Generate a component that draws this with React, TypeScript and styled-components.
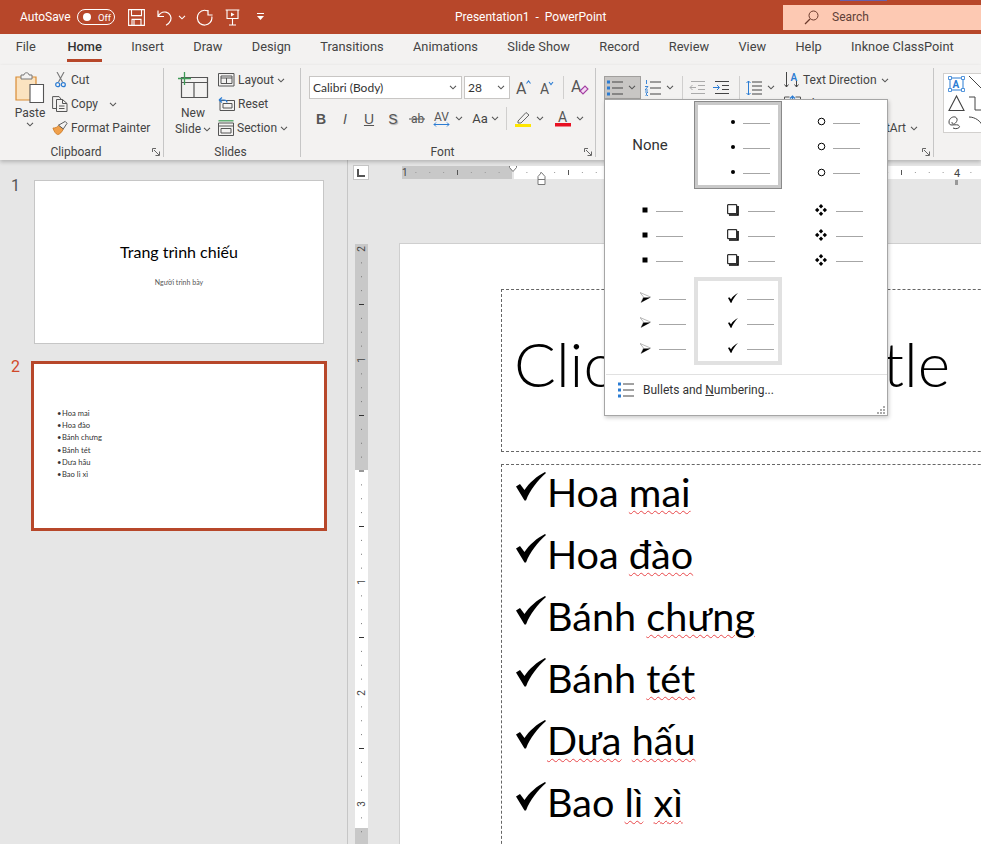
import React from "react";
import styled, { createGlobalStyle } from "styled-components";

const UI_FONT = `Roboto, "Open Sans", "Liberation Sans", sans-serif`;
const DOC_FONT = `Lato, "Noto Sans", "Liberation Sans", sans-serif`;
const BRAND = "#b7472a";

const GlobalStyle = createGlobalStyle`
  html, body { margin: 0; padding: 0; background: #e6e6e6; }
  * { box-sizing: border-box; }
`;

/* ---------- icons ---------- */
const Chevron = ({ color = "#555" }: { color?: string }) => (
  <svg width="8" height="5" viewBox="0 0 8 5" fill="none" stroke={color} strokeWidth="1.1">
    <path d="M1 .8 4 3.8 7 .8" />
  </svg>
);

const SaveIcon = () => (
  <svg width="17" height="17" viewBox="0 0 17 17" fill="none" stroke="#fff" strokeWidth="1.1">
    <path d="M.6.6h15.8v15.8H.6zM3.5.6v6h10v-6M4 16.4v-6h9v6M6 11v5.4" />
  </svg>
);
const UndoIcon = () => (
  <svg width="16" height="17" viewBox="0 0 16 17" fill="none" stroke="#fff" strokeWidth="1.2">
    <path d="M1 1.5v6h6M1.2 7.3C3 4 6 2.5 9 3.2c4 1 6 5 4.6 8.4-.8 2-2.6 3.6-4.6 4.6" />
  </svg>
);
const RedoIcon = () => (
  <svg width="17" height="17" viewBox="0 0 17 17" fill="none" stroke="#fff" strokeWidth="1.2">
    <path d="M12 1v5h4.600M11.5 1.800C8.500.8 5 1.500 3 4 .4 7.200 1 12 4 14.500c3 2.300 7.500 2 10-.8 1.600-1.800 2.200-4 1.800-6.200" />
  </svg>
);
const PresentIcon = () => (
  <svg width="15" height="17" viewBox="0 0 15 17" fill="none" stroke="#fff" strokeWidth="1.1">
    <path d="M.6 1h13.800M2 1v8.500h11V1M7.500 9.500V16M4 16h7" />
    <path d="M6 3.500 9.500 5.500 6 7.500z" fill="#fff" stroke="none" />
  </svg>
);
const CustomizeIcon = () => (
  <svg width="9" height="8" viewBox="0 0 9 8" fill="#fff">
    <rect x="1" y="0" width="7" height="1" />
    <path d="M1 3h7L4.500 7z" />
  </svg>
);
const SearchIcon = () => (
  <svg width="15" height="15" viewBox="0 0 15 15" fill="none" stroke="#6b3a2c" strokeWidth="1">
    <circle cx="9.500" cy="5.500" r="4.500" />
    <path d="M6 9 1 14" strokeWidth="1.300" />
  </svg>
);
const PasteIcon = () => (
  <svg width="30" height="31" viewBox="0 0 30 31">
    <path d="M1 5h20v23H1z" fill="#fbe3c0" stroke="#d98b34" strokeWidth="1.200" />
    <path d="M6 3h3c0-3 5-3 5 0h3v4H6z" fill="#f3f2f1" stroke="#777" strokeWidth="1" />
    <path d="M15 12.500h13.500v18H15z" fill="#fff" stroke="#555" strokeWidth="1.100" />
  </svg>
);
const ScissorsIcon = () => (
  <svg width="11" height="16" viewBox="0 0 11 16" fill="none">
    <path d="M2 0 7.500 10M9 0 3.500 10" stroke="#777" strokeWidth="1.100" />
    <circle cx="2.700" cy="12.700" r="2" stroke="#2b7cd3" strokeWidth="1.200" />
    <circle cx="8.300" cy="12.700" r="2" stroke="#2b7cd3" strokeWidth="1.200" />
  </svg>
);
const CopyIcon = () => (
  <svg width="16" height="16" viewBox="0 0 16 16" fill="none" stroke="#555" strokeWidth="1">
    <path d="M4 12.500H.6V.6h6.500L9 3" />
    <path d="M4.500 3.500h6l4.500 4v8H4.500zM10.500 3.500v4H15M7 10h5.500M7 12.500h5.500" />
  </svg>
);
const BrushIcon = () => (
  <svg width="17" height="16" viewBox="0 0 17 16">
    <path d="M1 8c3 0 5-1 6-3l5 4c-1 3-4 6-6 6-2-.5-4-3.500-5-7z" fill="#f0a04b" stroke="#c8741c" strokeWidth=".8" />
    <path d="M7 5l5 4 4-6-2-2z" fill="#f3f2f1" stroke="#555" strokeWidth="1" />
  </svg>
);
const LauncherIcon = () => (
  <svg width="8" height="8" viewBox="0 0 8 8" fill="none" stroke="#666" strokeWidth="1">
    <path d="M7.500 3.500v4h-4M.5 4V.5H4M2 2l5 5" />
  </svg>
);
const NewSlideIcon = () => (
  <svg width="31" height="27" viewBox="0 0 31 27">
    <path d="M3.500 5.500h26v20h-26zM3.500 10.500h26M16 10.500v15" fill="#f3f2f1" stroke="#555" strokeWidth="1.200" />
    <path d="M0 6.500h13M6.500 0v13" fill="none" stroke="#3f9b57" strokeWidth="1.300" />
  </svg>
);
const LayoutIcon = () => (
  <svg width="17" height="14" viewBox="0 0 17 14" fill="none" stroke="#555" strokeWidth="1">
    <path d="M.5.500h15.500v12.500H.5zM3 3h11v7.500H3zM3 5h11M8.500 5v5.500" />
  </svg>
);
const ResetIcon = () => (
  <svg width="17" height="14" viewBox="0 0 17 14" fill="none">
    <path d="M2 3.500h14.500v10H2zM5 6.500h9v4.500H5z" stroke="#555" strokeWidth="1" />
    <path d="M1 3 4 .5M1 3l3 2.500M1.500 3H6c2 0 3 1 3 2.500" stroke="#2b7cd3" strokeWidth="1.200" />
  </svg>
);
const SectionIcon = () => (
  <svg width="16" height="16" viewBox="0 0 16 16" fill="none" stroke="#555" strokeWidth="1">
    <path d="M.5.800h15" stroke="#3f9b57" strokeWidth="1.200" />
    <path d="M.5 3h15v12.500H.5zM.5 6h15M3 8.500h10v4.500H3z" />
  </svg>
);
const GrowIcon = () => (
  <svg width="17" height="18" viewBox="0 0 17 18">
    <text x="1" y="15" fontFamily={UI_FONT} fontSize="16" fill="#555">A</text>
    <path d="M11.500 4.500 13.500 2l2 2.500" fill="none" stroke="#2b7cd3" strokeWidth="1.100" />
  </svg>
);
const ShrinkIcon = () => (
  <svg width="16" height="17" viewBox="0 0 16 17">
    <text x="1" y="15" fontFamily={UI_FONT} fontSize="14" fill="#555">A</text>
    <path d="M10 3l2 2.500L14 3" fill="none" stroke="#2b7cd3" strokeWidth="1.100" />
  </svg>
);
const ClearIcon = () => (
  <svg width="20" height="19" viewBox="0 0 20 19">
    <text x="1" y="14" fontFamily={UI_FONT} fontSize="16" fill="#555">A</text>
    <path d="M10 13l5-5 3 3-5 5z" fill="#f4d9f4" stroke="#a33ea1" strokeWidth="1.100" />
  </svg>
);
const StrikeIcon = () => (
  <svg width="18" height="15" viewBox="0 0 18 15">
    <text x="3" y="11.500" fontFamily={UI_FONT} fontSize="12" fill="#555">ab</text>
    <path d="M1 8h16" stroke="#555" strokeWidth="1" />
  </svg>
);
const SpacingIcon = () => (
  <svg width="18" height="18" viewBox="0 0 18 18">
    <text x="1" y="11" fontFamily={UI_FONT} fontSize="12" fill="#555">AV</text>
    <path d="M1 14.500h15M3 12.500l-2 2 2 2M14 12.500l2 2-2 2" fill="none" stroke="#2b7cd3" strokeWidth="1" />
  </svg>
);
const HighlightIcon = () => (
  <svg width="16" height="16" viewBox="0 0 16 16">
    <path d="M3 10 11 1.500l3 2.500-8 8H3z" fill="#f3f2f1" stroke="#666" strokeWidth="1" />
    <rect x="0" y="13" width="16" height="3" fill="#ffe600" />
  </svg>
);
const FontColorIcon = () => (
  <svg width="16" height="17" viewBox="0 0 16 17">
    <text x="3" y="12" fontFamily={UI_FONT} fontSize="14" fill="#555">A</text>
    <rect x="0" y="13" width="16" height="3.500" fill="#e81123" />
  </svg>
);
const BulletsIcon = ({ size = 16 }: { size?: number }) => (
  <svg width={size} height={size} viewBox="0 0 16 16" fill="none">
    <path d="M5 2h11M5 8h11M5 14h11" stroke="#444" strokeWidth="1" />
    <path d="M0 .5h3v3H0zM0 6.500h3v3H0zM0 12.500h3v3H0z" fill="#2b7cd3" />
  </svg>
);
const NumberingIcon = () => (
  <svg width="16" height="16" viewBox="0 0 16 16" fill="none">
    <path d="M5 2h11M5 8h11M5 14h11" stroke="#444" strokeWidth="1" />
    <path d="M1.500 0v4M0 6.500h3L0 10h3M0 12h3L1 14l2 2H0" stroke="#2b7cd3" strokeWidth=".9" />
  </svg>
);
const OutdentIcon = () => (
  <svg width="16" height="13" viewBox="0 0 16 13" fill="none" stroke="#aaa" strokeWidth="1">
    <path d="M2 .5h14M9 4.500h7M9 8.500h7M2 12.500h14M7 6.500H1M3.500 4 1 6.500 3.500 9" />
  </svg>
);
const IndentIcon = () => (
  <svg width="16" height="13" viewBox="0 0 16 13" fill="none">
    <path d="M2 .5h14M9 4.500h7M9 8.500h7M2 12.500h14" stroke="#444" strokeWidth="1" />
    <path d="M0 6.500h6M4 4l2.500 2.500L4 9" stroke="#2b7cd3" strokeWidth="1" />
  </svg>
);
const LineSpacingIcon = () => (
  <svg width="16" height="16" viewBox="0 0 16 16" fill="none">
    <path d="M6 2h10M6 6h10M6 10h10M6 14h10" stroke="#444" strokeWidth="1" />
    <path d="M2.500 1v14M.5 3l2-2 2 2M.5 13l2 2 2-2" stroke="#2b7cd3" strokeWidth="1" />
  </svg>
);
const TextDirectionIcon = () => (
  <svg width="15" height="18" viewBox="0 0 15 18" fill="none">
    <path d="M2.500 1v15M.5 13.500l2 2.500 2-2.500M12.500 10v6M10.500 13.500l2 2.500 2-2.500" stroke="#444" strokeWidth="1" />
    <text x="6.500" y="9.500" fontFamily={UI_FONT} fontSize="10" fontWeight="600" fill="#2b7cd3">A</text>
  </svg>
);
const AlignTextIcon = () => (
  <svg width="17" height="18" viewBox="0 0 17 18" fill="none">
    <path d="M.5 5V2h5M11.500 2h5v3M.5 13v3h16v-3" stroke="#555" strokeWidth="1" />
    <path d="M8.500 10V1M6 3.500l2.500-2.500L11 3.500" stroke="#2b7cd3" strokeWidth="1.200" />
  </svg>
);
const ShapesIcon = () => (
  <svg width="38" height="57" viewBox="0 0 38 57" fill="none">
    <path d="M5 3h13v12H5z" stroke="#2b7cd3" strokeWidth="1" />
    <path d="M3.500 1.500h3v3h-3zM16.500 1.500h3v3h-3zM3.500 13.500h3v3h-3zM16.500 13.500h3v3h-3z" fill="#fff" stroke="#2b7cd3" strokeWidth=".8" />
    <text x="7.500" y="13" fontFamily={UI_FONT} fontSize="10" fontWeight="700" fill="#2b7cd3">A</text>
    <path d="M24 1l14 14" stroke="#444" strokeWidth="1" />
    <path d="M11.500 21 4 35.500h15z" stroke="#444" strokeWidth="1.100" />
    <path d="M24 22h6v13h8" stroke="#444" strokeWidth="1" />
    <path d="M8 53c4 2 9-1 5-3-4-1-9 2-9-3s7-7 8-3c1 3-5 8-5 3" stroke="#444" strokeWidth="1" />
    <path d="M24 42c6 0 12 4 14 10" stroke="#444" strokeWidth="1" />
  </svg>
);
const CheckBullet = () => (
  <svg width="30" height="29" viewBox="0 0 30 29" fill="#000">
    <path d="M0 14.500 4 12 8.500 18C13 11 21 4 29 0l1 1C22 8 14 18 10 28.500H8.500z" />
  </svg>
);
const RoundMarker = () => (
  <svg width="8" height="8" viewBox="0 0 8 8"><circle cx="4" cy="4" r="2" fill="#000" /></svg>
);
const RingMarker = () => (
  <svg width="9" height="9" viewBox="0 0 9 9" fill="none" stroke="#000" strokeWidth="1"><circle cx="4.500" cy="4.500" r="3.300" /></svg>
);
const SquareMarker = () => (
  <svg width="6" height="6" viewBox="0 0 6 6"><rect x=".5" y=".5" width="5" height="5" fill="#000" /></svg>
);
const BoxMarker = () => (
  <svg width="12" height="12" viewBox="0 0 12 12" fill="none" stroke="#000">
    <path d="M.7.700h9v9h-9z" strokeWidth="1" />
    <path d="M11 2v9H2" strokeWidth="1.600" />
  </svg>
);
const DiamondMarker = () => (
  <svg width="12" height="12" viewBox="0 0 12 12" fill="#000">
    <path d="M6 0 8.200 2.200 6 4.400 3.800 2.200zM6 7.600l2.200 2.200L6 12 3.800 9.800zM2.200 3.800 4.400 6 2.200 8.200 0 6zM9.800 3.800 12 6 9.800 8.200 7.600 6z" />
  </svg>
);
const ArrowMarker = () => (
  <svg width="11" height="11" viewBox="0 0 11 11">
    <path d="M0 .5 10.500 5 1 10.500 3.500 5z" fill="#fff" stroke="#888" strokeWidth=".6" />
    <path d="M3.500 5.500h7L1 10.500z" fill="#000" />
  </svg>
);
const CheckMarker = () => (
  <svg width="10" height="10" viewBox="0 0 10 10" fill="#000">
    <path d="M0 5l1.300-.8L3 6.300C4.500 3.500 7 1.500 10 0 7.500 2.500 5 6 3.300 10H2.800z" />
  </svg>
);
const GripIcon = () => (
  <svg width="8" height="8" viewBox="0 0 8 8" fill="#aaa">
    <path d="M6 0h2v2H6zM3 3h2v2H3zM6 3h2v2H6zM0 6h2v2H0zM3 6h2v2H3zM6 6h2v2H6z" />
  </svg>
);

/* ---------- rulers ---------- */
const INCH = 111;

const HorizontalRuler = () => {
  const zero = 111;
  const ticks = [];
  for (let i = -8; i < 40; i++) {
    const x = zero + (i * INCH) / 8;
    if (i % 8 === 0) continue;
    ticks.push(
      i % 4 === 0 ? (
        <path key={i} d={`M${x} 4v5`} stroke="#555" />
      ) : (
        <path key={i} d={`M${x} 6v1`} stroke="#999" />
      )
    );
  }
  return (
    <svg width="579" height="22" viewBox="0 0 579 22">
      <rect x="0" y="0" width="110" height="13" fill="#c8c8c8" />
      <rect x="112" y="0" width="467" height="13" fill="#fff" />
      {ticks}
      <text x="0" y="10" fontFamily={UI_FONT} fontSize="10" fill="#444">1</text>
      <text x={zero + INCH * 4} y="10.500" fontFamily={UI_FONT} fontSize="11" textAnchor="middle" fill="#444">4</text>
      <path d="M107.500 -1.500h7v3l-3.500 4-3.500-4z" fill="#fff" stroke="#777" />
      <path d="M139.500 6.500l-3.500 4v3h7v-3z" fill="#fff" stroke="#777" />
      <path d="M136 13.500h7v5h-7z" fill="#fff" stroke="#777" />
      <rect x="553" y="14" width="3" height="5" fill="#999" />
    </svg>
  );
};

const VerticalRuler = () => {
  const zero = 227;
  const ticks = [];
  for (let i = -16; i < 30; i++) {
    const y = zero + (i * INCH) / 8;
    if (i % 8 === 0 && i !== 0) continue;
    ticks.push(
      i % 4 === 0 ? (
        <path key={i} d={`M4 ${y}h5`} stroke="#333" />
      ) : (
        <path key={i} d={`M6 ${y}h1`} stroke="#777" />
      )
    );
  }
  const labels: [number, string][] = [[-2, "2"], [-1, "1"], [1, "1"], [2, "2"], [3, "3"]];
  return (
    <svg width="13" height="600" viewBox="0 0 13 600">
      <rect x="0" y="0" width="13" height="226" fill="#c8c8c8" />
      <rect x="0" y="226" width="13" height="358" fill="#fff" />
      <rect x="0" y="584" width="13" height="16" fill="#c8c8c8" />
      {ticks}
      {labels.map(([n, label]) => {
        const y = zero + n * INCH;
        return (
          <text key={n} x="6.500" y={y} transform={`rotate(-90 6.500 ${y})`} dy="3.500" fontFamily={UI_FONT} fontSize="10" textAnchor="middle" fill="#444">
            {label}
          </text>
        );
      })}
    </svg>
  );
};

/* ---------- page shell ---------- */
const Page = styled.div`
  width: 981px;
  height: 844px;
  overflow: hidden;
  display: flex;
  flex-direction: column;
  font-family: ${UI_FONT};
  color: #444;
  background: #e6e6e6;
`;

const TitleBar = styled.div`
  position: relative;
  height: 34px;
  flex: none;
  background: ${BRAND};
  color: #fff;
  font-size: 12px;
  display: flex;
  align-items: center;
  padding-left: 20px;
  &::after {
    content: "";
    position: absolute;
    top: 0;
    left: 840px;
    width: 47px;
    height: 1px;
    background: #6a5fa8;
  }
`;

const QuickAccess = styled.div`
  width: 435px;
  display: flex;
  align-items: center;
`;

const AutoSaveLabel = styled.span`
  width: 57px;
`;

const Toggle = styled.div`
  width: 38px;
  height: 16px;
  border: 1px solid #fff;
  border-radius: 8px;
  display: flex;
  align-items: center;
  gap: 7px;
  padding-left: 5px;
  font-size: 9.5px;
  margin-right: 13px;
  &::before {
    content: "";
    width: 8px;
    height: 8px;
    border-radius: 50%;
    background: #fff;
  }
`;

const QuickButton = styled.div<{ $w: number }>`
  width: ${(p) => p.$w}px;
  display: flex;
  align-items: center;
  gap: 5px;
`;

const WindowTitle = styled.div`
  width: 328px;
  white-space: nowrap;
`;

const SearchBox = styled.div`
  width: 198px;
  height: 25px;
  background: #fdc9b3;
  color: #5f4037;
  display: flex;
  align-items: center;
  gap: 13px;
  padding-left: 21px;
`;

const Tabs = styled.div`
  height: 31px;
  flex: none;
  background: #f3f2f1;
  display: flex;
  padding-left: 1px;
`;

const Tab = styled.div<{ $active?: boolean }>`
  margin: 0 14.7px;
  display: flex;
  align-items: center;
  padding-bottom: 1px;
  font-size: 12.8px;
  white-space: nowrap;
  font-weight: ${(p) => (p.$active ? 500 : 400)};
  color: ${(p) => (p.$active ? "#333" : "#444")};
  border-bottom: 3px solid ${(p) => (p.$active ? BRAND : "transparent")};
  height: 28px;
  &:first-child {
    margin-right: 17px;
  }
`;

const Ribbon = styled.div`
  height: 95px;
  flex: none;
  background: #f3f2f1;
  display: flex;
  padding: 3px 0;
  position: relative;
  z-index: 2;
  box-shadow: 0 2px 4px rgba(0, 0, 0, 0.22);
  font-size: 12px;
`;

const Group = styled.div<{ $w: number }>`
  width: ${(p) => p.$w}px;
  flex: none;
  display: flex;
  flex-direction: column;
  border-right: 1px solid #c6c6c6;
  &:last-child {
    border-right: none;
  }
`;

const GroupBody = styled.div`
  flex: 1;
  display: flex;
  min-height: 0;
`;

const GroupFooter = styled.div`
  height: 16px;
  display: flex;
  align-items: center;
  padding-right: 3px;
  margin-bottom: -3px;
`;

const GroupLabel = styled.div`
  flex: 1;
  text-align: center;
  font-size: 12px;
  color: #444;
`;

const BigButton = styled.div<{ $w: number; $ml: number }>`
  width: ${(p) => p.$w}px;
  margin-left: ${(p) => p.$ml}px;
  display: flex;
  flex-direction: column;
  align-items: center;
  padding-top: 4px;
  line-height: 15px;
  flex: none;
`;

const BigIconSlot = styled.div`
  height: 31px;
  margin-bottom: 2px;
  display: flex;
  align-items: flex-start;
`;

const BigLabel = styled.div`
  display: flex;
  align-items: center;
  gap: 2px;
  white-space: nowrap;
  margin-top: 1px;
`;

const SmallColumn = styled.div<{ $ml: number }>`
  margin-left: ${(p) => p.$ml}px;
  display: flex;
  flex-direction: column;
`;

const SmallRow = styled.div<{ $gap?: number }>`
  height: 24px;
  display: flex;
  align-items: center;
  white-space: nowrap;
  gap: ${(p) => p.$gap ?? 3}px;
`;

const SmallIcon = styled.span<{ $w?: number }>`
  width: ${(p) => p.$w ?? 16}px;
  display: flex;
  justify-content: center;
`;

const FontColumn = styled.div`
  display: flex;
  flex-direction: column;
  gap: 8px;
  padding: 8px 0 0 8px;
`;

const FontRow = styled.div`
  display: flex;
  align-items: center;
  height: 23px;
`;

const Select = styled.div<{ $w: number }>`
  width: ${(p) => p.$w}px;
  height: 23px;
  background: #fff;
  border: 1px solid #c8c6c4;
  margin-right: 2px;
  display: flex;
  align-items: center;
  justify-content: space-between;
  padding: 0 4px 0 3px;
  font-family: ${DOC_FONT};
  font-size: 12px;
  color: #333;
`;

const Tool = styled.div<{ $w: number; $gap?: number }>`
  width: ${(p) => p.$w}px;
  height: 22px;
  flex: none;
  display: flex;
  align-items: center;
  justify-content: center;
  gap: ${(p) => p.$gap ?? 5}px;
  font-size: 13px;
`;

const FormatGlyph = styled.span<{ $kind: "b" | "i" | "u" | "s" }>`
  font-family: "Liberation Sans", sans-serif;
  font-size: 14px;
  color: #555;
  font-weight: ${(p) => (p.$kind === "b" ? 700 : 400)};
  font-style: ${(p) => (p.$kind === "i" ? "italic" : "normal")};
  text-decoration: ${(p) => (p.$kind === "u" ? "underline" : "none")};
  text-shadow: ${(p) => (p.$kind === "s" ? "1px 1px 1px #aaa" : "none")};
`;

const VDivider = styled.div<{ $mx?: number }>`
  width: 1px;
  height: 23px;
  flex: none;
  background: #d0cfce;
  margin: 0 ${(p) => p.$mx ?? 6}px;
`;

const ParagraphColumn = styled.div`
  display: flex;
  align-items: flex-start;
  padding: 8px 0 0 8px;
  width: 188px;
  flex: none;
`;

const BulletDrop = styled.div`
  position: relative;
  width: 37px;
  height: 23px;
  flex: none;
  background: #c8c6c4;
  border: 1px solid #a19f9d;
  display: flex;
  align-items: center;
  gap: 5px;
  padding-left: 2px;
`;

const ParaTool = styled.div<{ $w: number; $ml?: number }>`
  width: ${(p) => p.$w}px;
  height: 23px;
  margin-left: ${(p) => p.$ml ?? 0}px;
  flex: none;
  display: flex;
  align-items: center;
  gap: 5px;
`;

const TextColumn = styled.div`
  display: flex;
  flex-direction: column;
  width: 140px;
  flex: none;
`;

const RightRow = styled(SmallRow)`
  justify-content: flex-end;
  width: 134px;
  gap: 4px;
`;

const ShapeGallery = styled.div`
  margin: 5px 0 0 9px;
  width: 60px;
  height: 60px;
  background: #fff;
  border: 1px solid #d2d0ce;
  padding: 1px 0 0 1px;
  flex: none;
  display: flex;
`;

/* ---------- bullet menu ---------- */
const Menu = styled.div`
  position: absolute;
  top: 22px;
  left: -1px;
  width: 284px;
  height: 317px;
  background: #fff;
  border: 1px solid #a6a6a6;
  box-shadow: 1px 2px 4px rgba(0, 0, 0, 0.2);
  display: flex;
  flex-direction: column;
  z-index: 5;
  color: #333;
`;

const BulletGrid = styled.div`
  display: grid;
  grid-template-columns: repeat(3, 88px);
  grid-auto-rows: 88px;
  padding: 1px 0 0 1px;
`;

const BulletCell = styled.div<{ $state?: "selected" | "hover" }>`
  padding: 4px 0 0 29px;
  display: flex;
  flex-direction: column;
  justify-content: center;
  border: 4px solid transparent;
  ${(p) =>
    p.$state === "selected" &&
    `border-color: #c9c9c9; outline: 1px solid #8a8a8a; outline-offset: -1px;`}
  ${(p) => p.$state === "hover" && `border-color: #e1e1e1;`}
`;

const NoneCell = styled.div`
  display: flex;
  align-items: center;
  justify-content: center;
  font-size: 15px;
`;

const BulletRow = styled.div`
  height: 26.5px;
  display: flex;
  align-items: center;
`;

const Marker = styled.span`
  width: 12px;
  display: flex;
  justify-content: center;
  flex: none;
`;

const BulletLine = styled.span<{ $gap: number }>`
  width: 27px;
  height: 1px;
  margin: 3px 0 0 ${(p) => p.$gap}px;
  background: #a6a6a6;
`;

const MenuFooter = styled.div`
  margin: 9px 0 0 1px;
  border-top: 1px solid #e1e1e1;
  display: flex;
  align-items: center;
  gap: 9px;
  padding: 7px 0 0 12px;
  font-size: 12px;
  color: #333;
  white-space: nowrap;
`;

const MenuGrip = styled.div`
  display: flex;
  justify-content: flex-end;
  padding: 8px 2px 0 0;
`;

/* ---------- body ---------- */
const Main = styled.div`
  flex: 1;
  min-height: 0;
  display: flex;
`;

const Sidebar = styled.div`
  width: 348px;
  flex: none;
  background: #e6e6e6;
  border-right: 1px solid #c6c6c6;
  padding-top: 20px;
  display: flex;
  flex-direction: column;
  gap: 17px;
`;

const ThumbRow = styled.div`
  display: flex;
`;

const ThumbNumber = styled.div<{ $active?: boolean }>`
  width: 31px;
  padding-left: 11px;
  font-size: 16px;
  line-height: 12px;
  flex: none;
  color: ${(p) => (p.$active ? "#d0492a" : "#555")};
`;

const Thumb = styled.div<{ $active?: boolean }>`
  background: #fff;
  font-family: ${DOC_FONT};
  color: #111;
  ${(p) =>
    p.$active
      ? `width: 296px; height: 170px; border: 3px solid ${BRAND}; padding: 43px 0 0 23px;`
      : `width: 290px; height: 164px; margin-left: 3px; border: 1px solid #c6c6c6;
         display: flex; flex-direction: column; align-items: center; padding-top: 60px;`}
`;

const ThumbTitle = styled.div`
  font-size: 16px;
  line-height: 22px;
  color: #000;
`;

const ThumbSubtitle = styled.div`
  font-size: 7px;
  margin-top: 15px;
  color: #555;
`;

const ThumbItem = styled.div`
  font-size: 7.6px;
  line-height: 12.2px;
  color: #333;
  white-space: nowrap;
  &::before {
    content: "•";
    display: inline-block;
    width: 5px;
  }
`;

const Editor = styled.div`
  flex: 1;
  min-width: 0;
  display: flex;
  flex-direction: column;
  overflow: hidden;
`;

const RulerRow = styled.div`
  height: 26px;
  flex: none;
  display: flex;
  padding: 5px 0 0 5px;
`;

const RulerCorner = styled.div`
  width: 16px;
  height: 15px;
  background: #fff;
  border: 1px solid #c6c6c6;
  flex: none;
  margin-right: 33px;
  display: flex;
  align-items: center;
  justify-content: center;
  &::after {
    content: "";
    width: 6px;
    height: 6px;
    border-left: 2px solid #555;
    border-bottom: 2px solid #555;
  }
`;

const HRulerSlot = styled.div`
  padding-top: 1px;
`;

const EditorBody = styled.div`
  flex: 1;
  min-height: 0;
  display: flex;
  padding-left: 7px;
`;

const VRulerSlot = styled.div`
  padding-top: 58px;
  width: 13px;
  flex: none;
  margin-right: 31px;
`;

const SlideArea = styled.div`
  flex: 1;
  min-width: 0;
  margin-top: 57px;
  background: #fff;
  border-left: 1px solid #cfcfcf;
  border-top: 1px solid #cfcfcf;
  padding: 45px 0 0 101px;
  overflow: hidden;
  font-family: ${DOC_FONT};
  color: #000;
`;

const Placeholder = styled.div<{ $h: number }>`
  width: 540px;
  height: ${(p) => p.$h}px;
  border: 1px dashed #666;
`;

const TitleText = styled.div`
  font-size: 62px;
  font-weight: 300;
  line-height: 147px;
  padding-left: 12px;
  white-space: nowrap;
`;

const BodyBox = styled(Placeholder)`
  margin-top: 12px;
  padding-left: 14px;
  display: flex;
  flex-direction: column;
  gap: 6px;
`;

const BodyRow = styled.div`
  height: 56px;
  display: flex;
  align-items: center;
  gap: 1px;
  font-size: 39.6px;
  white-space: nowrap;
`;

const BodyText = styled.span`
  padding-bottom: 4px;
`;

const CheckSlot = styled.span`
  display: flex;
  margin-bottom: 14px;
`;

const Misspelled = styled.span`
  text-decoration: underline wavy #e8474a 1px;
  text-underline-offset: 3px;
`;

const BULLET_ROWS = [0, 1, 2];

const BULLET_STYLES: {
  marker: React.ReactNode;
  gap: number;
  state?: "selected" | "hover";
}[] = [
  { marker: <RoundMarker />, gap: 4, state: "selected" },
  { marker: <RingMarker />, gap: 6 },
  { marker: <SquareMarker />, gap: 5 },
  { marker: <BoxMarker />, gap: 9 },
  { marker: <DiamondMarker />, gap: 9 },
  { marker: <ArrowMarker />, gap: 8 },
  { marker: <CheckMarker />, gap: 8, state: "hover" },
];

const SLIDE_ITEMS: React.ReactNode[] = [
  <>Hoa <Misspelled>mai</Misspelled></>,
  <>Hoa <Misspelled>đào</Misspelled></>,
  <>Bánh <Misspelled>chưng</Misspelled></>,
  <>Bánh <Misspelled>tét</Misspelled></>,
  <><Misspelled>Dưa</Misspelled> <Misspelled>hấu</Misspelled></>,
  <>Bao <Misspelled>lì</Misspelled> <Misspelled>xì</Misspelled></>,
];

const TABS = ["File", "Home", "Insert", "Draw", "Design", "Transitions", "Animations", "Slide Show", "Record", "Review", "View", "Help", "Inknoe ClassPoint"];

const BulletMenu = () => (
  <Menu>
    <BulletGrid>
      <NoneCell>None</NoneCell>
      {BULLET_STYLES.map((style, i) => (
        <BulletCell key={i} $state={style.state}>
          {BULLET_ROWS.map((row) => (
            <BulletRow key={row}>
              <Marker>{style.marker}</Marker>
              <BulletLine $gap={style.gap} />
            </BulletRow>
          ))}
        </BulletCell>
      ))}
    </BulletGrid>
    <MenuFooter>
      <BulletsIcon />
      <span>
        Bullets and <u>N</u>umbering...
      </span>
    </MenuFooter>
    <MenuGrip>
      <GripIcon />
    </MenuGrip>
  </Menu>
);

export default function App() {
  return (
    <Page>
      <GlobalStyle />
      <TitleBar>
        <QuickAccess>
          <AutoSaveLabel>AutoSave</AutoSaveLabel>
          <Toggle>Off</Toggle>
          <QuickButton $w={29}><SaveIcon /></QuickButton>
          <QuickButton $w={39}><UndoIcon /><Chevron color="#fff" /></QuickButton>
          <QuickButton $w={29}><RedoIcon /></QuickButton>
          <QuickButton $w={31}><PresentIcon /></QuickButton>
          <QuickButton $w={12}><CustomizeIcon /></QuickButton>
        </QuickAccess>
        <WindowTitle>Presentation1 &nbsp;-&nbsp; PowerPoint</WindowTitle>
        <SearchBox><SearchIcon />Search</SearchBox>
      </TitleBar>

      <Tabs>
        {TABS.map((tab) => (
          <Tab key={tab} $active={tab === "Home"}>{tab}</Tab>
        ))}
      </Tabs>

      <Ribbon>
        <Group $w={164}>
          <GroupBody>
            <BigButton $w={34} $ml={13}>
              <BigIconSlot><PasteIcon /></BigIconSlot>
              <BigLabel>Paste</BigLabel>
              <BigLabel><Chevron /></BigLabel>
            </BigButton>
            <SmallColumn $ml={5}>
              <SmallRow><SmallIcon><ScissorsIcon /></SmallIcon>Cut</SmallRow>
              <SmallRow><SmallIcon><CopyIcon /></SmallIcon>Copy<SmallIcon $w={24}><Chevron /></SmallIcon></SmallRow>
              <SmallRow><SmallIcon><BrushIcon /></SmallIcon>Format Painter</SmallRow>
            </SmallColumn>
          </GroupBody>
          <GroupFooter><GroupLabel>Clipboard</GroupLabel><LauncherIcon /></GroupFooter>
        </Group>

        <Group $w={137}>
          <GroupBody>
            <BigButton $w={38} $ml={10}>
              <BigIconSlot><NewSlideIcon /></BigIconSlot>
              <BigLabel>New</BigLabel>
              <BigLabel>Slide<Chevron /></BigLabel>
            </BigButton>
            <SmallColumn $ml={6}>
              <SmallRow><LayoutIcon />Layout<Chevron /></SmallRow>
              <SmallRow><ResetIcon />Reset</SmallRow>
              <SmallRow><SectionIcon />Section<Chevron /></SmallRow>
            </SmallColumn>
          </GroupBody>
          <GroupFooter><GroupLabel>Slides</GroupLabel></GroupFooter>
        </Group>

        <Group $w={295}>
          <GroupBody>
            <FontColumn>
              <FontRow>
                <Select $w={153}>Calibri (Body)<Chevron /></Select>
                <Select $w={46}>28<Chevron /></Select>
                <Tool $w={22}><GrowIcon /></Tool>
                <Tool $w={26}><ShrinkIcon /></Tool>
                <VDivider $mx={3} />
                <Tool $w={26}><ClearIcon /></Tool>
              </FontRow>
              <FontRow>
                <Tool $w={24}><FormatGlyph $kind="b">B</FormatGlyph></Tool>
                <Tool $w={24}><FormatGlyph $kind="i">I</FormatGlyph></Tool>
                <Tool $w={24}><FormatGlyph $kind="u">U</FormatGlyph></Tool>
                <Tool $w={24}><FormatGlyph $kind="s">S</FormatGlyph></Tool>
                <Tool $w={24}><StrikeIcon /></Tool>
                <Tool $w={38} $gap={4}><SpacingIcon /><Chevron /></Tool>
                <Tool $w={37} $gap={3}>Aa<Chevron /></Tool>
                <VDivider $mx={2} />
                <Tool $w={40}><HighlightIcon /><Chevron /></Tool>
                <Tool $w={40}><FontColorIcon /><Chevron /></Tool>
              </FontRow>
            </FontColumn>
          </GroupBody>
          <GroupFooter><GroupLabel>Font</GroupLabel><LauncherIcon /></GroupFooter>
        </Group>

        <Group $w={338}>
          <GroupBody>
            <ParagraphColumn>
              <BulletDrop>
                <BulletsIcon />
                <Chevron />
                <BulletMenu />
              </BulletDrop>
              <ParaTool $w={31} $ml={4}><NumberingIcon /><Chevron /></ParaTool>
              <VDivider $mx={6} />
              <ParaTool $w={24}><OutdentIcon /></ParaTool>
              <ParaTool $w={23}><IndentIcon /></ParaTool>
              <VDivider $mx={3} />
              <ParaTool $w={30} $ml={3}><LineSpacingIcon /><Chevron /></ParaTool>
            </ParagraphColumn>
            <TextColumn>
              <SmallRow $gap={4}><TextDirectionIcon />Text Direction<Chevron /></SmallRow>
              <SmallRow><AlignTextIcon />Align Text<Chevron /></SmallRow>
              <RightRow>Convert to SmartArt<Chevron /></RightRow>
            </TextColumn>
          </GroupBody>
          <GroupFooter><GroupLabel /><LauncherIcon /></GroupFooter>
        </Group>

        <Group $w={47}>
          <GroupBody>
            <ShapeGallery><ShapesIcon /></ShapeGallery>
          </GroupBody>
        </Group>
      </Ribbon>

      <Main>
        <Sidebar>
          <ThumbRow>
            <ThumbNumber>1</ThumbNumber>
            <Thumb>
              <ThumbTitle>Trang trình chiếu</ThumbTitle>
              <ThumbSubtitle>Người trình bày</ThumbSubtitle>
            </Thumb>
          </ThumbRow>
          <ThumbRow>
            <ThumbNumber $active>2</ThumbNumber>
            <Thumb $active>
              {["Hoa mai", "Hoa đào", "Bánh chưng", "Bánh tét", "Dưa hấu", "Bao lì xì"].map((item) => (
                <ThumbItem key={item}>{item}</ThumbItem>
              ))}
            </Thumb>
          </ThumbRow>
        </Sidebar>

        <Editor>
          <RulerRow>
            <RulerCorner />
            <HRulerSlot><HorizontalRuler /></HRulerSlot>
          </RulerRow>
          <EditorBody>
            <VRulerSlot><VerticalRuler /></VRulerSlot>
            <SlideArea>
              <Placeholder $h={163}>
                <TitleText>Click to add title</TitleText>
              </Placeholder>
              <BodyBox $h={400}>
                {SLIDE_ITEMS.map((item, i) => (
                  <BodyRow key={i}>
                    <CheckSlot><CheckBullet /></CheckSlot>
                    <BodyText>{item}</BodyText>
                  </BodyRow>
                ))}
              </BodyBox>
            </SlideArea>
          </EditorBody>
        </Editor>
      </Main>
    </Page>
  );
}
